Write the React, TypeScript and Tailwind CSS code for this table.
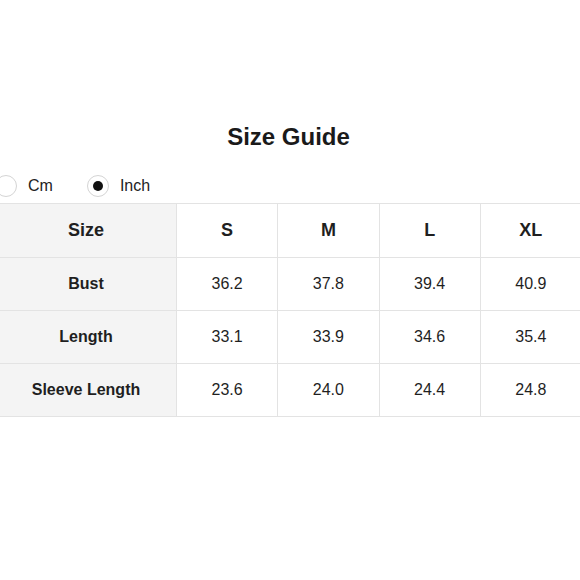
import React, { useState } from "react";

const sizes = ["S", "M", "L", "XL"];

const rows: { label: string; values: string[] }[] = [
  { label: "Bust", values: ["36.2", "37.8", "39.4", "40.9"] },
  { label: "Length", values: ["33.1", "33.9", "34.6", "35.4"] },
  { label: "Sleeve Length", values: ["23.6", "24.0", "24.4", "24.8"] },
];

const Radio: React.FC<{ label: string; checked: boolean; onClick: () => void }> = ({
  label,
  checked,
  onClick,
}) => (
  <button onClick={onClick} className="flex items-center gap-[11px] h-[22px]">
    <span className="w-[22px] h-[22px] rounded-full border border-[#d4d4d4] bg-white flex items-center justify-center">
      {checked && <span className="w-[10px] h-[10px] rounded-full bg-[#111]" />}
    </span>
    <span className="text-[16px] text-[#222]">{label}</span>
  </button>
);

export default function App() {
  const [unit, setUnit] = useState<"cm" | "inch">("inch");

  return (
    <div className="w-[580px] h-[580px] bg-white overflow-hidden font-['Liberation_Sans',Arial,sans-serif]">
      <div className="ml-[-5px] w-[587px] pt-[121px]">
        <h1 className="text-center text-[24px] leading-[32px] font-bold text-[#1a1a1a]">
          Size Guide
        </h1>

        <div className="flex items-center gap-[34px] mt-[22px]">
          <Radio label="Cm" checked={unit === "cm"} onClick={() => setUnit("cm")} />
          <Radio label="Inch" checked={unit === "inch"} onClick={() => setUnit("inch")} />
        </div>

        <table className="mt-[6px] w-full border-collapse table-fixed text-[#1f1f1f]">
          <colgroup>
            <col className="w-[181px]" />
            <col />
            <col />
            <col />
            <col />
          </colgroup>
          <thead>
            <tr className="h-[54px]">
              <th className="border border-[#e3e3e3] bg-[#f4f4f4] text-[18px] font-bold">Size</th>
              {sizes.map((s) => (
                <th key={s} className="border border-[#e3e3e3] text-[18px] font-bold">
                  {s}
                </th>
              ))}
            </tr>
          </thead>
          <tbody>
            {rows.map((r) => (
              <tr key={r.label} className="h-[53px]">
                <td className="border border-[#e3e3e3] bg-[#f4f4f4] text-center text-[16px] font-bold">
                  {r.label}
                </td>
                {r.values.map((v, i) => (
                  <td key={i} className="border border-[#e3e3e3] text-center text-[16px]">
                    {v}
                  </td>
                ))}
              </tr>
            ))}
          </tbody>
        </table>
      </div>
    </div>
  );
}
